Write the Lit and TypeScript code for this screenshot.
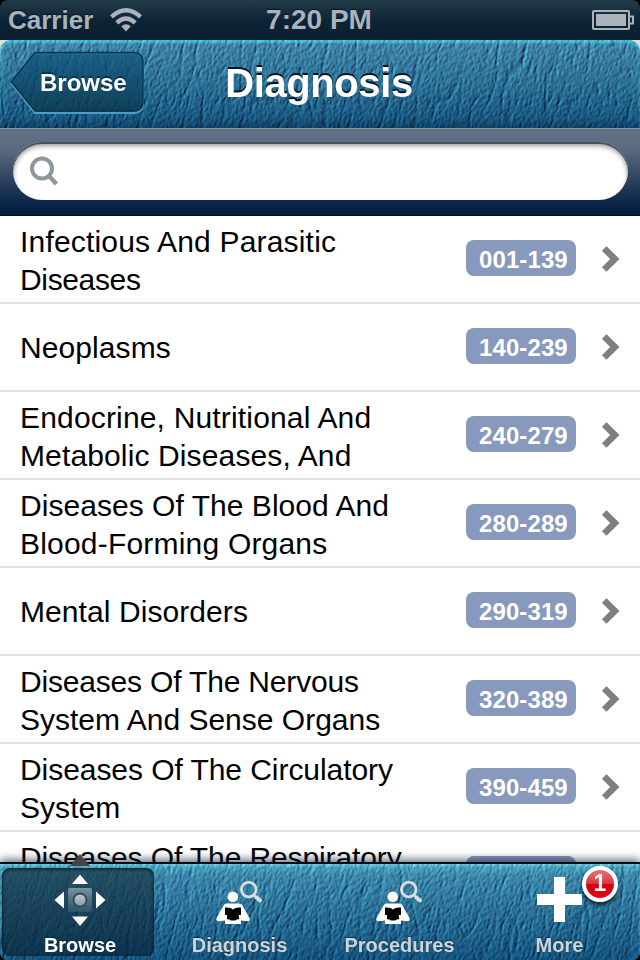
import { LitElement, css, html, svg } from 'lit';
import { customElement, property } from 'lit/decorators.js';
import { styleMap } from 'lit/directives/style-map.js';

interface TitleLine {
  text: string;
  tracking: number;
}

interface Chapter {
  lines: TitleLine[];
  codes: string;
}

const line = (text: string, tracking = 0): TitleLine => ({ text, tracking });

const CHAPTERS: Chapter[] = [
  { lines: [line('Infectious And Parasitic', 0.18), line('Diseases', -0.35)], codes: '001-139' },
  { lines: [line('Neoplasms', 0.08)], codes: '140-239' },
  { lines: [line('Endocrine, Nutritional And', 0.17), line('Metabolic Diseases, And', 0.13)], codes: '240-279' },
  { lines: [line('Diseases Of The Blood And', 0.04), line('Blood-Forming Organs', 0.2)], codes: '280-289' },
  { lines: [line('Mental Disorders', 0.08)], codes: '290-319' },
  { lines: [line('Diseases Of The Nervous', -0.18), line('System And Sense Organs')], codes: '320-389' },
  { lines: [line('Diseases Of The Circulatory', -0.06), line('System', 0.05)], codes: '390-459' },
  { lines: [line('Diseases Of The Respiratory', -0.11), line('System')], codes: '460-519' },
];

const browseIcon = svg`
  <defs>
    <linearGradient id="pad" x1="0" y1="0" x2="0" y2="1">
      <stop offset="0" stop-color="#8da3ae" stop-opacity="0.850" />
      <stop offset="1" stop-color="#5d7d8d" stop-opacity="0.300" />
    </linearGradient>
    <linearGradient id="knob" x1="0" y1="0" x2="0" y2="1">
      <stop offset="0" stop-color="#c3ced4" />
      <stop offset="1" stop-color="#8499a4" />
    </linearGradient>
  </defs>
  <rect x="20" y="20" width="24" height="24" rx="2" fill="url(#pad)" />
  <circle cx="32" cy="32" r="6.500" fill="url(#knob)" stroke="#304b5a" stroke-width="2" />
  <path d="M32 6.500l8 9.500H24zM32 58l8-9.500H24zM6.500 32l9.500-8.500v17zM57.500 32l-9.500-8.500v17z" fill="#fff" />
`;

const readerIcon = svg`
  <circle cx="40.700" cy="21.500" r="7.300" fill="none" stroke="#d9dee1" stroke-width="2.800" />
  <path d="M45.800 26.800l2 2" stroke="#d9dee1" stroke-width="2.500" />
  <path d="M48.500 29.500l3.500 3" stroke="#d9dee1" stroke-width="4" stroke-linecap="round" />
  <circle cx="24.800" cy="28.800" r="5.300" fill="#fff" />
  <path d="M18.500 35.500h13q2 0 3 2.200l7 12.300q1 3-2 3.300l-6.500-0.800v3.500H17v-3.500l-6.500 0.800q-3-0.300-2-3.300l7-12.300q1-2.200 3-2.200z" fill="#fff" />
  <path d="M17 39.500q6-0.500 8 2.200 2-2.700 8-2.200v7.500h-2.200l0.400 4.300q-2.700-0.300-4 1.200h-4.400q-1.300-1.500-4-1.200l0.400-4.300H17z" fill="#000" />
`;

const plusIcon = svg`<path d="M26 9h11v17h17v11H37v17H26V37H9V26h17z" fill="#fff" />`;

/** Grained leather, lit from the upper left. Blends over the parent's gradient. */
@customElement('leather-grain')
export class LeatherGrain extends LitElement {
  static styles = css`
    :host {
      position: absolute;
      inset: 0;
      overflow: hidden;
      mix-blend-mode: overlay;
      opacity: 0.75;
      pointer-events: none;
    }

    svg {
      display: block;
      width: 100%;
      height: 100%;
    }
  `;

  @property({ type: Number }) seed = 3;

  render() {
    return html`
      <svg>
        <filter id="grain" x="0" y="0" width="100%" height="100%" color-interpolation-filters="sRGB">
          <feTurbulence type="turbulence" baseFrequency="0.07 0.016" numOctaves="2" seed=${this.seed} />
          <feColorMatrix values="0 0 0 0 0  0 0 0 0 0  0 0 0 0 0  1 0 0 0 0" />
          <feComponentTransfer result="creases">
            <feFuncA type="table" tableValues="0 0.8 0.95 1 1 1 1 1 1 1 1" />
          </feComponentTransfer>
          <feTurbulence type="fractalNoise" baseFrequency="0.42 0.24" numOctaves="2" seed="5" />
          <feColorMatrix values="0 0 0 0 0  0 0 0 0 0  0 0 0 0 0  1 0 0 0 0" result="pores" />
          <feComposite in="creases" in2="pores" operator="arithmetic" k1="0" k2="0.35" k3="0.55" k4="0" />
          <feDiffuseLighting surfaceScale="1.500" diffuseConstant="0.960" lighting-color="#fff">
            <feDistantLight azimuth="205" elevation="30" />
          </feDiffuseLighting>
        </filter>
        <g transform="skewX(-10)">
          <rect x="-10" width="700" height="100%" filter="url(#grain)" />
        </g>
      </svg>
    `;
  }
}

@customElement('status-bar')
export class StatusBar extends LitElement {
  static styles = css`
    :host {
      display: block;
      height: 40px;
      background: #000;
    }

    .bar {
      display: grid;
      grid-template-columns: 1fr auto 1fr;
      align-items: center;
      height: 40px;
      padding: 0 6px 0 8px;
      box-sizing: border-box;
      border-radius: 8px 8px 0 0;
      background: linear-gradient(#243b4a, #0c2334 55%, #0a2031);
      color: #aab3bb;
      font-weight: bold;
      text-shadow: 0 -1px 1px #061520;
    }

    .carrier {
      display: flex;
      align-items: center;
      gap: 17px;
      font-size: 26px;
    }

    .time {
      margin-right: 4px;
      font-size: 28px;
    }

    .battery {
      justify-self: end;
    }

    svg {
      display: block;
    }
  `;

  render() {
    return html`
      <div class="bar">
        <div class="carrier">
          <span>Carrier</span>
          <svg width="32" height="24" viewBox="0 0 32 24" fill="none" stroke="#aab3bb" stroke-width="4.400">
            <path d="M1.500 8.800Q16-4.200 30.500 8.800" />
            <path d="M6.800 14.800Q16 6.200 25.200 14.800" />
            <path d="M16 23.500l-4.800-5.300Q16 14.200 20.800 18.200z" fill="#aab3bb" stroke="none" />
          </svg>
        </div>
        <div class="time">7:20 PM</div>
        <svg class="battery" width="42" height="22" viewBox="0 0 42 22">
          <rect x="1" y="2" width="36" height="18" rx="1" fill="none" stroke="#aab3bb" stroke-width="2" />
          <rect x="4" y="5" width="30" height="12" fill="#aab3bb" />
          <path d="M38 7.500h3v7h-3" fill="none" stroke="#aab3bb" stroke-width="2" />
        </svg>
      </div>
    `;
  }
}

@customElement('nav-header')
export class NavHeader extends LitElement {
  static styles = css`
    :host {
      display: block;
      height: 88px;
      background: #dcdcda;
    }

    .bar {
      position: relative;
      isolation: isolate;
      display: grid;
      grid-template-columns: 1fr auto 1fr;
      align-items: center;
      height: 88px;
      padding: 0 12px 0 10px;
      box-sizing: border-box;
      overflow: hidden;
      border-radius: 12px 12px 0 0;
      background: linear-gradient(#4389a9, #2d7397 50%, #1b5a84 88%, #0e4369);
      box-shadow: inset 0 3px 2px #43bdd4;
    }

    .back {
      position: relative;
      display: flex;
      align-items: center;
      width: 136px;
      height: 64px;
      margin-bottom: 4px;
    }

    .shape {
      position: absolute;
      inset: 0;
    }

    .label {
      position: relative;
      padding: 2px 0 0 30px;
      color: #fff;
      font-size: 24px;
      font-weight: bold;
      text-shadow: 0 -2px 1px #0b3046;
    }

    h1 {
      position: relative;
      margin: 0 0 2px;
      color: #fff;
      font-size: 40px;
      font-weight: bold;
      letter-spacing: -0.4px;
      text-shadow: 0 -2px 0 #04131d;
    }
  `;

  render() {
    return html`
      <div class="bar">
        <leather-grain></leather-grain>
        <div class="back">
          <svg class="shape" width="136" height="64" viewBox="0 0 136 64">
            <defs>
              <linearGradient id="fill" x1="0" y1="0" x2="0" y2="1">
                <stop offset="0" stop-color="#0f577f" stop-opacity="0.750" />
                <stop offset="1" stop-color="#0c374f" stop-opacity="0.800" />
              </linearGradient>
            </defs>
            <path d="M25 4h98q10 0 10 10v39q0 10-10 10H25L1.500 33.500z" fill="none" stroke="#4a9fc4" stroke-width="2" />
            <path d="M25 2.500h98q10 0 10 10v39q0 9.500-10 9.500H25L1.500 32z" fill="url(#fill)" stroke="#0a344b" stroke-width="1.500" />
          </svg>
          <span class="label">Browse</span>
        </div>
        <h1>Diagnosis</h1>
      </div>
    `;
  }
}

@customElement('search-field')
export class SearchField extends LitElement {
  static styles = css`
    :host {
      display: block;
      height: 88px;
      box-sizing: border-box;
      padding: 14px 12px 16px 13px;
      background: linear-gradient(#637284, #596a80 25%, #1e3554 70%, #001d40 96%);
      box-shadow: inset 0 1px #8c9093, inset 0 -1px #000c20;
    }

    .field {
      display: flex;
      align-items: center;
      height: 58px;
      box-sizing: border-box;
      padding: 1px 0 0 16px;
      border-radius: 29px;
      background: #fff;
      box-shadow: inset 0 2px #48525f, inset 0 4px 5px #999;
    }
  `;

  render() {
    return html`
      <div class="field">
        <svg width="30" height="32" viewBox="0 0 30 32" fill="none" stroke="#8e979e">
          <circle cx="13" cy="12.500" r="10" stroke-width="4" />
          <path d="M19.500 19.500l8 8.500" stroke-width="4.500" />
        </svg>
      </div>
    `;
  }
}

@customElement('chapter-row')
export class ChapterRow extends LitElement {
  static styles = css`
    :host {
      display: flex;
      flex: none;
      align-items: center;
      height: 88px;
      box-sizing: border-box;
      padding: 0 20px;
      border-bottom: 2px solid #e0e0e0;
      background: #fff;
    }

    .title {
      flex: 1;
      padding-top: 3px;
      color: #000;
      font-size: 30px;
      line-height: 38px;
      white-space: nowrap;
    }

    .line:only-child {
      margin-bottom: 2px;
    }

    .codes {
      width: 110px;
      height: 36px;
      box-sizing: border-box;
      margin: 0 25px 2px 0;
      padding-left: 13px;
      border-radius: 8px;
      background: #8799bd;
      color: #fff;
      font-size: 24px;
      font-weight: bold;
      letter-spacing: 0.1px;
      line-height: 40px;
    }
  `;

  @property({ attribute: false }) chapter!: Chapter;

  render() {
    return html`
      <div class="title">
        ${this.chapter.lines.map(
          ({ text, tracking }) =>
            html`<div class="line" style=${styleMap({ letterSpacing: `${tracking}px` })}>${text}</div>`
        )}
      </div>
      <div class="codes">${this.chapter.codes}</div>
      <svg width="19" height="28" viewBox="0 0 19 28">
        <path d="M3.200 3.500L13.800 14 3.200 24.500" fill="none" stroke="#808080" stroke-width="6.600" />
      </svg>
    `;
  }
}

@customElement('tab-item')
export class TabItem extends LitElement {
  static styles = css`
    :host {
      position: relative;
      display: flex;
      flex-direction: column;
      align-items: center;
      height: 88px;
      box-sizing: border-box;
      padding-left: 3px;
      border-radius: 8px;
      color: #cfd3d6;
    }

    :host([selected]) {
      padding-left: 4px;
      color: #fff;
      background: linear-gradient(rgba(26, 60, 76, 0.75), rgba(8, 38, 58, 0.72));
      box-shadow: inset 0 1px 3px 1px rgba(4, 26, 40, 0.7);
    }

    svg {
      display: block;
      flex: none;
      width: 64px;
      height: 64px;
    }

    .label {
      flex: none;
      margin-top: 2px;
      font-size: 20px;
      font-weight: bold;
      line-height: 22px;
      text-shadow: 0 -1px 1px rgba(0, 30, 50, 0.6);
    }

    .badge {
      position: absolute;
      top: -2px;
      left: 100px;
      width: 28px;
      height: 28px;
      border: 4px solid #fff;
      border-radius: 50%;
      background: linear-gradient(#e8747b, #db3640 48%, #d0000e 52%, #e20613);
      box-shadow: 0 3px 4px rgba(0, 0, 0, 0.7);
      color: #fff;
      font-size: 23px;
      font-weight: bold;
      line-height: 27px;
      text-align: center;
    }
  `;

  @property() label = '';
  @property({ attribute: false }) icon: unknown;
  @property({ type: Number }) badge = 0;
  @property({ type: Boolean, reflect: true }) selected = false;

  render() {
    return html`
      <svg viewBox="0 0 64 64">${this.icon}</svg>
      <div class="label">${this.label}</div>
      ${this.badge ? html`<div class="badge">${this.badge}</div>` : ''}
    `;
  }
}

@customElement('tab-bar')
export class TabBar extends LitElement {
  static styles = css`
    :host {
      position: relative;
      display: block;
      height: 98px;
      background: #000;
      box-shadow: 0 -3px 8px rgba(20, 30, 50, 0.6);
    }

    .bar {
      position: relative;
      isolation: isolate;
      height: 98px;
      box-sizing: border-box;
      padding: 4px 4px 0 2px;
      overflow: hidden;
      border-top: 2px solid #020e1c;
      border-radius: 0 0 8px 8px;
      background: linear-gradient(#50abc3, #3d8aac 12%, #2b7397 50%, #155581);
      box-shadow: inset 0 2px 2px #62c3d6;
    }

    .tabs {
      position: relative;
      display: grid;
      grid-template-columns: repeat(4, 152px);
      column-gap: 8px;
    }

    .pointer {
      position: absolute;
      top: -8px;
      left: 70px;
    }
  `;

  render() {
    return html`
      <div class="bar">
        <leather-grain seed="8"></leather-grain>
        <div class="tabs">
          <tab-item label="Browse" .icon=${browseIcon} selected></tab-item>
          <tab-item label="Diagnosis" .icon=${readerIcon}></tab-item>
          <tab-item label="Procedures" .icon=${readerIcon}></tab-item>
          <tab-item label="More" .icon=${plusIcon} badge="1"></tab-item>
        </div>
      </div>
      <svg class="pointer" width="20" height="12" viewBox="0 0 20 12">
        <path d="M10 0l10 12H0z" fill="#444" />
      </svg>
    `;
  }
}

@customElement('app-root')
export class AppRoot extends LitElement {
  static styles = css`
    :host {
      display: flex;
      flex-direction: column;
      width: 640px;
      height: 960px;
      overflow: hidden;
      background: #fff;
      font-family: 'Liberation Sans', Arial, sans-serif;
    }

    .list {
      display: flex;
      flex: 1;
      flex-direction: column;
      min-height: 0;
      overflow: hidden;
    }
  `;

  render() {
    return html`
      <status-bar></status-bar>
      <nav-header></nav-header>
      <search-field></search-field>
      <div class="list">
        ${CHAPTERS.map((chapter) => html`<chapter-row .chapter=${chapter}></chapter-row>`)}
      </div>
      <tab-bar></tab-bar>
    `;
  }
}
